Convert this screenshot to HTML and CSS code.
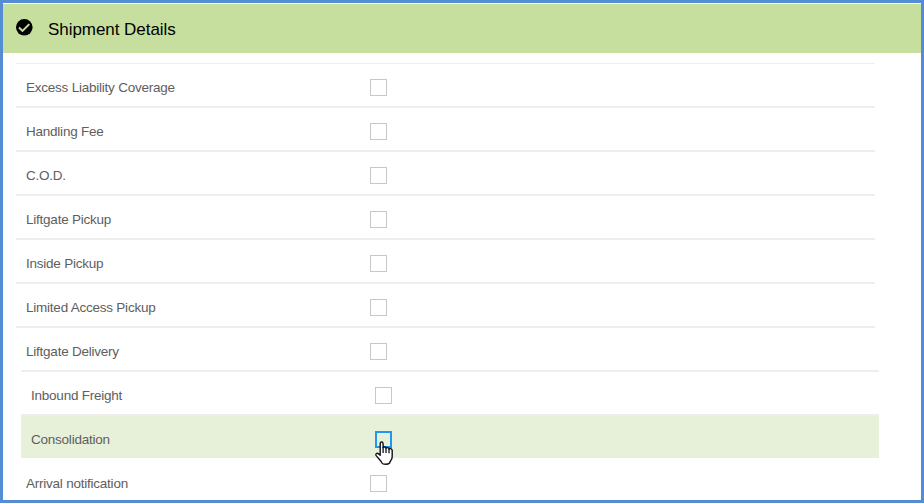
FILE: index.html
```html
<!DOCTYPE html>
<html lang="en">
<head>
<meta charset="utf-8">
<title>Shipment Details</title>
<link rel="stylesheet" href="styles.css">
</head>
<body>
<main class="panel">
  <header class="panel-header">
    <svg class="check-icon" width="18" height="18" viewBox="0 0 18 18"><circle cx="9.3" cy="9.3" r="8.3" fill="#000"/><path d="M4 9.5 7.5 12.9 14.3 6.1" fill="none" stroke="#c6df9e" stroke-width="2"/></svg>
    <h1>Shipment Details</h1>
  </header>
  <div class="options">
    <label class="row"><span class="name">Excess Liability Coverage</span><input type="checkbox"></label>
    <label class="row"><span class="name">Handling Fee</span><input type="checkbox"></label>
    <label class="row"><span class="name">C.O.D.</span><input type="checkbox"></label>
    <label class="row"><span class="name">Liftgate Pickup</span><input type="checkbox"></label>
    <label class="row"><span class="name">Inside Pickup</span><input type="checkbox"></label>
    <label class="row"><span class="name">Limited Access Pickup</span><input type="checkbox"></label>
    <label class="row before-shifted"><span class="name">Liftgate Delivery</span><input type="checkbox"></label>
    <label class="row shifted"><span class="name">Inbound Freight</span><input type="checkbox"></label>
    <label class="row shifted active"><span class="name">Consolidation</span><span class="box"><input type="checkbox"><svg class="pointer" width="18" height="24" viewBox="0 0 18 24"><path d="M5.2 13.5V2.7Q5.2 1 6.6 1T8.1 2.7V6.6Q8.4 5.9 9.7 6T11 7.1Q11.4 6.4 12.6 6.6T14 8Q14.5 7.3 15.7 7.6T17.2 9.4V15.5Q17.2 17.8 15.9 19.4 15 20.6 14.6 22 13.4 23.3 10.5 23.3T7 22Q6.4 20.6 5.1 19.2L1.2 14.6Q.3 13.3 1.5 12.5T5.2 14.3Z" fill="#fff" stroke="#10101c" stroke-width="1.4" stroke-linejoin="round"/><path d="M8.1 6V12M11 7V12M14 8V12.3" fill="none" stroke="#10101c" stroke-width="1.3"/></svg></span></label>
    <label class="row last"><span class="name">Arrival notification</span><input type="checkbox"></label>
  </div>
</main>
</body>
</html>
```
FILE: styles.css
```css
* { box-sizing: border-box; }

body {
  margin: 0;
  background: #fff;
  font-family: "Liberation Sans", Arial, sans-serif;
}

.panel {
  height: 503px;
  border: 3px solid #548dd4;
  padding-top: 1px;
  overflow: hidden;
}

.panel-header {
  display: flex;
  align-items: center;
  height: 49px;
  padding-left: 12px;
  background: #c6df9e;
}

.check-icon {
  margin: 0 15px 3px 0;
}

h1 {
  margin: 0;
  padding-top: 2px;
  color: #000;
  font-size: 17px;
  letter-spacing: -0.05px;
  font-weight: 400;
  line-height: 20px;
}

.options {
  width: 859px;
  margin: 10px 0 0 13px;
  border-top: 1px solid #eee;
}

.row {
  display: flex;
  align-items: center;
  height: 44px;
  padding: 5px 0 0 10px;
  border-bottom: 2px solid #eee;
  color: #5e5e5e;
  font-size: 13.5px;
  letter-spacing: -0.23px;
}

.name {
  width: 344px;
  line-height: 16px;
}

input {
  appearance: none;
  display: block;
  width: 17px;
  height: 17px;
  margin: 0;
  border: 1px solid #c8c8c8;
  background: #fff;
}

.before-shifted {
  width: 863px;
  border-bottom-color: transparent;
  background: linear-gradient(#eee, #eee) 5px 100% / 858px 2px no-repeat border-box;
}

.shifted {
  width: 858px;
  margin-left: 5px;
}

.active {
  border-bottom-color: transparent;
  background: #e7f1d9;
  background-clip: padding-box;
}

.active input {
  border: 2px solid #2196f3;
  background: transparent;
}

.box {
  position: relative;
}

.pointer {
  position: absolute;
  top: 10px;
  left: 0;
}

.last {
  border-bottom: 0;
  height: 42px;
}
```
